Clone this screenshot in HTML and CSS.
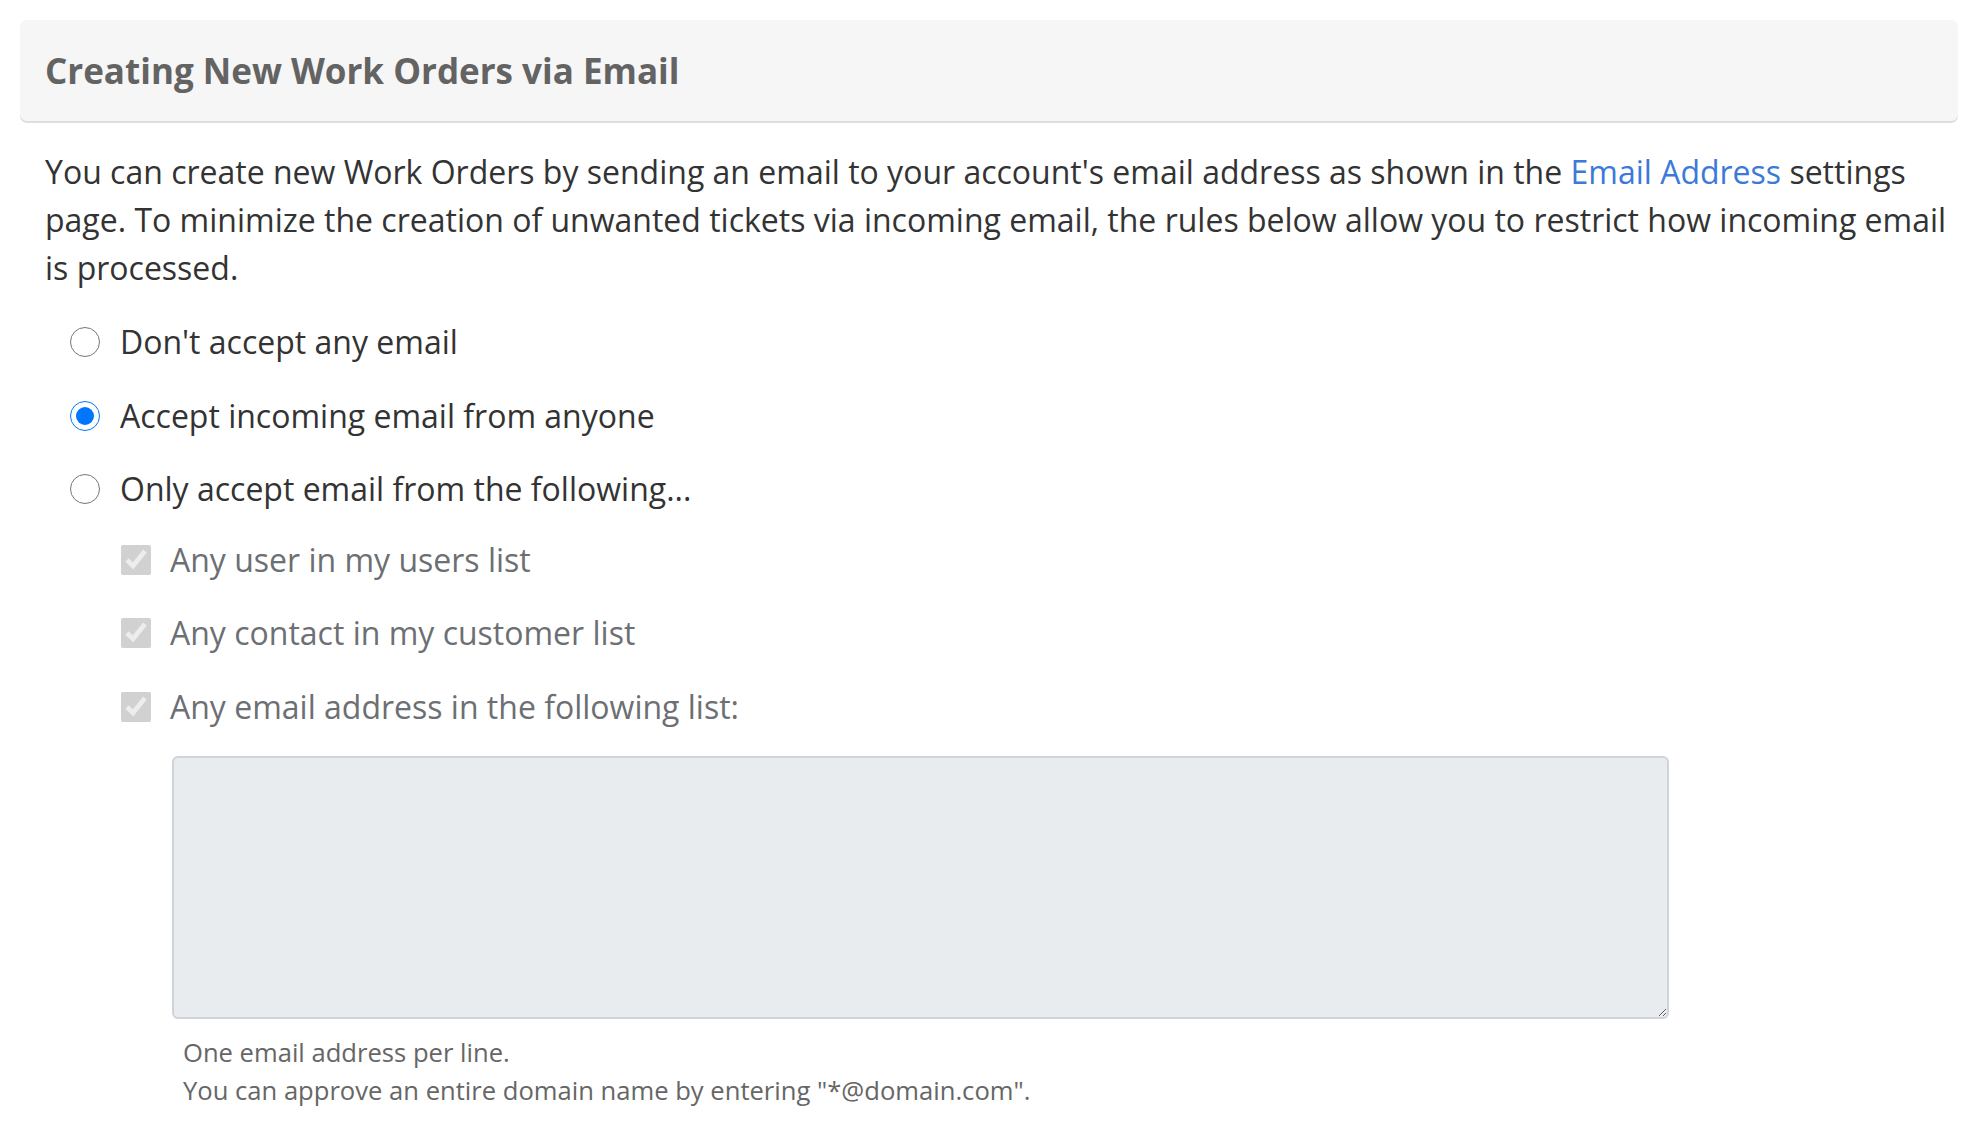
FILE: index.html
```html
<!DOCTYPE html>
<html lang="en">
<head>
<meta charset="utf-8">
<title>Creating New Work Orders via Email</title>
<link rel="stylesheet" href="styles.css">
</head>
<body>
<div class="page">
  <div class="panel-head">
    <h2 class="title">Creating New Work Orders via Email</h2>
  </div>
  <div class="panel-body">
    <p class="intro">You can create new Work Orders by sending an email to your account's email address as shown in the <a href="#" class="link">Email Address</a> settings page. To minimize the creation of unwanted tickets via incoming email, the rules below allow you to restrict how incoming email is processed.</p>
    <div class="options">
      <label class="opt"><input type="radio" name="mode" class="radio"><span>Don't accept any email</span></label>
      <label class="opt"><input type="radio" name="mode" class="radio" checked><span>Accept incoming email from anyone</span></label>
      <label class="opt"><input type="radio" name="mode" class="radio"><span>Only accept email from the following...</span></label>
      <div class="sub">
        <label class="opt dim"><input type="checkbox" class="check" checked disabled><span>Any user in my users list</span></label>
        <label class="opt dim"><input type="checkbox" class="check" checked disabled><span>Any contact in my customer list</span></label>
        <label class="opt dim"><input type="checkbox" class="check" checked disabled><span>Any email address in the following list:</span></label>
        <div class="list-wrap">
          <textarea class="list" disabled></textarea>
          <div class="help">
            <div>One email address per line.</div>
            <div>You can approve an entire domain name by entering "*@domain.com".</div>
          </div>
        </div>
      </div>
    </div>
  </div>
</div>
</body>
</html>
```

FILE: styles.css
```css
html, body {
  margin: 0;
  padding: 0;
  background: #ffffff;
}
body {
  font-family: "Open Sans", "Noto Sans", sans-serif;
  color: #333333;
}
.page {
  padding: 20px 18px 0 20px;
}
.panel-head {
  background: #f6f6f6;
  border-radius: 7px;
  box-shadow: 0 2px 0 #dedede;
  height: 101px;
  display: flex;
  align-items: center;
  padding: 0 25px;
  margin-right: 9px;
}
.title {
  margin: 0;
  font-size: 35px;
  font-weight: 700;
  color: #636363;
}
.panel-body {
  padding: 27px 0 0 25px;
}
.intro {
  margin: 0;
  font-size: 32px;
  line-height: 48px;
  color: #333333;
}
.link {
  color: #3b7ad9;
  text-decoration: none;
}
.options {
  display: flex;
  flex-direction: column;
  gap: 25.5px;
  margin-top: 26px;
  padding-left: 25px;
}
.sub {
  display: flex;
  flex-direction: column;
  gap: 25.5px;
  padding-left: 51px;
  margin-top: -3px;
}
.opt {
  display: flex;
  align-items: center;
  gap: 20px;
  font-size: 32px;
  line-height: 48px;
  color: #333333;
}
.opt.dim {
  color: #6c6f73;
  gap: 19px;
}
.radio, .check {
  width: 30px;
  height: 30px;
  margin: 0;
  flex: none;
}
.list-wrap {
  padding-left: 51px;
  margin-top: 0;
}
.list {
  display: block;
  box-sizing: border-box;
  width: 1497px;
  height: 263px;
  background: #e9ecef;
  border: 2px solid #ced4da;
  border-radius: 6px;
  margin: 0;
}
.help {
  margin-top: 15px;
  padding-left: 11px;
  font-size: 25.6px;
  line-height: 38px;
  color: #666666;
}
```
